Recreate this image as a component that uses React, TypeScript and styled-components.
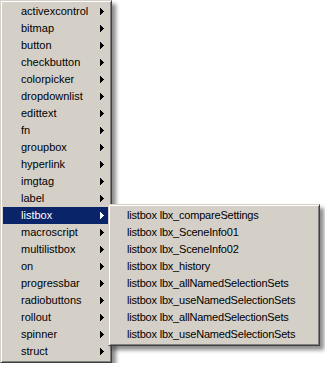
import React from 'react';
import styled, { createGlobalStyle } from 'styled-components';

const GlobalStyle = createGlobalStyle`
  html, body {
    margin: 0;
    padding: 0;
    background: #ffffff;
  }
  body {
    font-family: Tahoma, "Liberation Sans", Arial, sans-serif;
    font-size: 11px;
  }
`;

const mainItems = [
  'activexcontrol',
  'bitmap',
  'button',
  'checkbutton',
  'colorpicker',
  'dropdownlist',
  'edittext',
  'fn',
  'groupbox',
  'hyperlink',
  'imgtag',
  'label',
  'listbox',
  'macroscript',
  'multilistbox',
  'on',
  'progressbar',
  'radiobuttons',
  'rollout',
  'spinner',
  'struct',
];

const subItems = [
  'listbox lbx_compareSettings',
  'listbox lbx_SceneInfo01',
  'listbox lbx_SceneInfo02',
  'listbox lbx_history',
  'listbox lbx_allNamedSelectionSets',
  'listbox lbx_useNamedSelectionSets',
  'listbox lbx_allNamedSelectionSets',
  'listbox lbx_useNamedSelectionSets',
];

function Arrow({ active }: { active: boolean }) {
  return (
    <ArrowIcon width="4" height="7" viewBox="0 0 4 7">
      <polygon points="0,0 4,3.5 0,7" fill={active ? '#ffffff' : '#000000'} />
    </ArrowIcon>
  );
}

export default function App() {
  const openItem = 'listbox';

  return (
    <>
      <GlobalStyle />
      <Menu>
        {mainItems.map(name => {
          const active = name === openItem;
          return (
            <Item key={name} $active={active}>
              <Label>{name}</Label>
              <Arrow active={active} />
              {active && (
                <SubMenu>
                  {subItems.map((sub, i) => (
                    <SubItem key={i}>{sub}</SubItem>
                  ))}
                </SubMenu>
              )}
            </Item>
          );
        })}
      </Menu>
    </>
  );
}

const Panel = styled.div`
  box-sizing: border-box;
  background: #d4d0c8;
  border: 1px solid;
  border-color: #d4d0c8 #404040 #404040 #d4d0c8;
  padding: 2px;
  box-shadow: inset 1px 1px 0 #ffffff, inset -1px -1px 0 #808080,
    4px 4px 4px rgba(0, 0, 0, 0.45);
  color: #000000;
`;

const Menu = styled(Panel)`
  width: 112px;
  display: flex;
  flex-direction: column;
`;

const Item = styled.div<{ $active: boolean }>`
  position: relative;
  height: 17px;
  line-height: 17px;
  display: flex;
  align-items: center;
  padding: 0 5px 0 18px;
  background: ${p => (p.$active ? '#0a246a' : 'transparent')};
  color: ${p => (p.$active ? '#ffffff' : '#000000')};
  white-space: nowrap;
`;

const Label = styled.span`
  flex: 1;
`;

const ArrowIcon = styled.svg`
  display: block;
  shape-rendering: crispEdges;
`;

const SubMenu = styled(Panel)`
  position: absolute;
  left: calc(100% - 1px);
  top: -3px;
  width: 212px;
  display: flex;
  flex-direction: column;
  z-index: 2;
`;

const SubItem = styled.div`
  height: 17px;
  line-height: 17px;
  padding-left: 16px;
  letter-spacing: -0.2px;
  white-space: nowrap;
  color: #000000;
`;
